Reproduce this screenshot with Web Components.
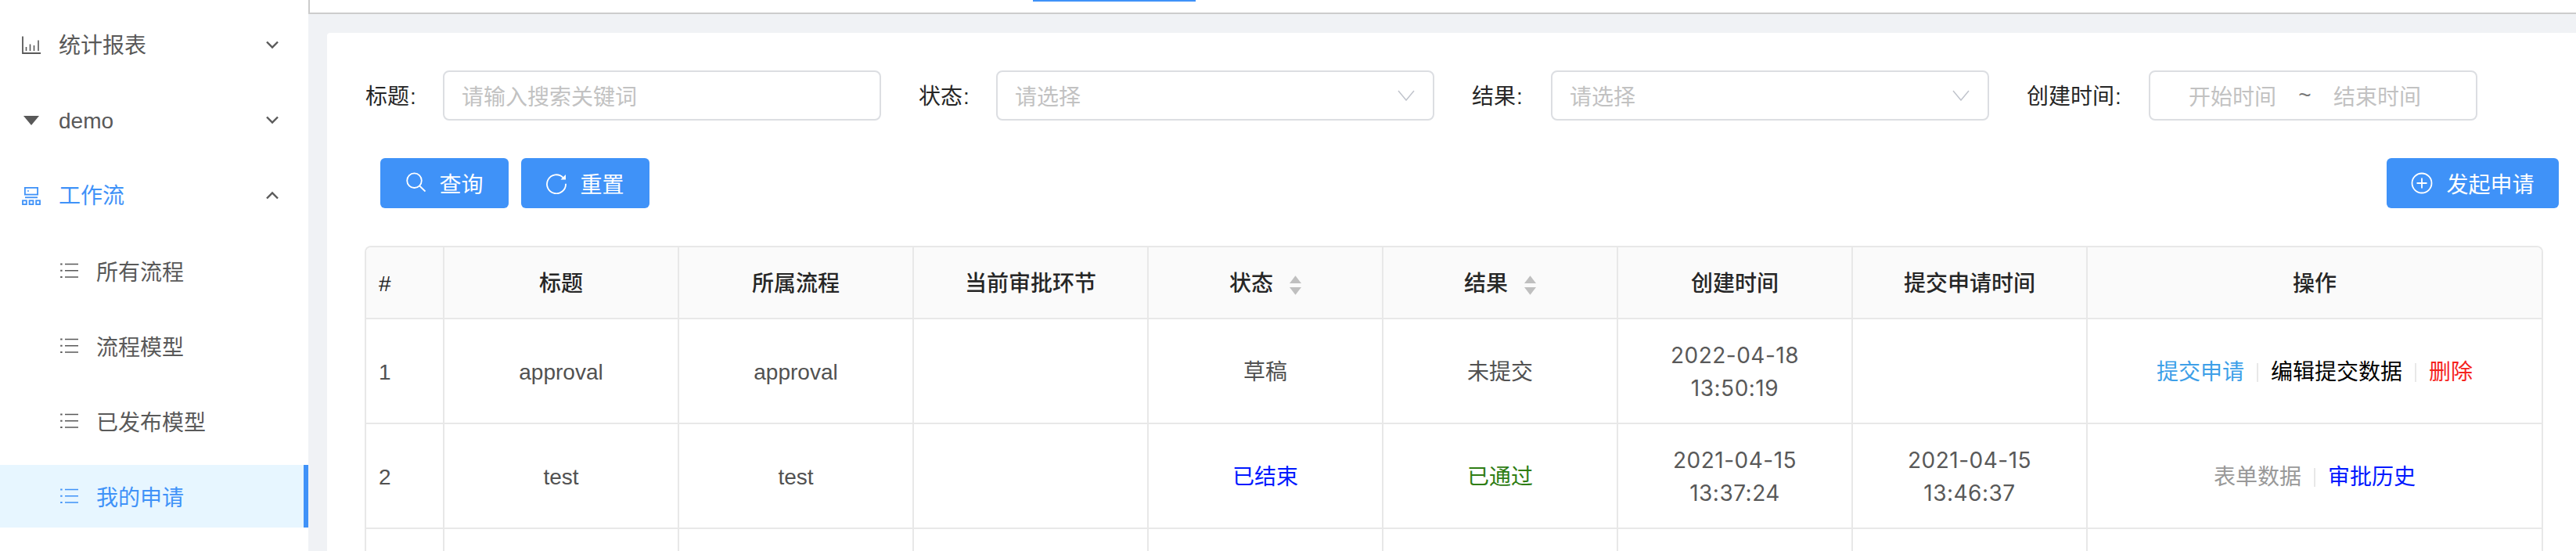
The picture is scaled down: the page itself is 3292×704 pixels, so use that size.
<!DOCTYPE html>
<html lang="zh-CN"><head><meta charset="utf-8"><title>我的申请</title>
<style>
html,body{margin:0;padding:0;height:704px;overflow:hidden;background:#f0f2f5;}
body{font:28px "Liberation Sans","Noto Sans CJK SC",sans-serif;color:#515151;}
</style></head><body>
<app-shell>
  <side-nav slot="nav">
    <nav-item icon="chart" caret="down">统计报表</nav-item>
    <nav-item icon="tri" caret="down">demo</nav-item>
    <nav-item icon="flow" caret="up" open>工作流</nav-item>
    <nav-sub>所有流程</nav-sub>
    <nav-sub>流程模型</nav-sub>
    <nav-sub>已发布模型</nav-sub>
    <nav-sub active>我的申请</nav-sub>
  </side-nav>
  <top-bar slot="top"></top-bar>
  <content-card slot="main">
    <filter-bar>
      <form-field label="标题" label-w="99" w="560"><text-box>请输入搜索关键词</text-box></form-field>
      <form-field label="状态" label-w="99" w="560"><text-box chevron>请选择</text-box></form-field>
      <form-field label="结果" label-w="101" w="560"><text-box chevron>请选择</text-box></form-field>
      <form-field label="创建时间" label-w="156" w="420"><date-range></date-range></form-field>
    </filter-bar>
    <tool-bar>
      <action-button slot="left" icon="search" w="164">查询</action-button>
      <action-button slot="left" icon="reset" w="164">重置</action-button>
      <action-button slot="right" icon="plus" w="220">发起申请</action-button>
    </tool-bar>
    <apply-table></apply-table>
  </content-card>
</app-shell>
<script>
const ICONS={
 chart:'<svg width="24" height="24" viewBox="0 0 24 24" fill="none" stroke="currentColor" stroke-width="1.800"><path d="M1 .500v21.500h23"/><path d="M5.500 19v-5M10.500 19v-8.500M15.500 19v-7M21 19V5.500" stroke-width="1.600"/></svg>',
 tri:'<svg width="24" height="24" viewBox="0 0 24 24" fill="currentColor"><path d="M2 6h20L12 18z"/></svg>',
 flow:'<svg width="24" height="24" viewBox="0 0 24 24" fill="none" stroke="currentColor" stroke-width="1.800"><rect x="3.900" y="1.900" width="16.200" height="8.700"/><path d="M4 14.300h16"/><rect x="1" y="18.300" width="4.800" height="4.800"/><rect x="9.600" y="18.300" width="4.800" height="4.800"/><rect x="18.200" y="18.300" width="4.800" height="4.800"/><circle cx="8" cy="6" r=".9" fill="currentColor" stroke="none"/></svg>',
 list:'<svg width="24" height="20" viewBox="0 0 24 20" fill="none" stroke="currentColor" stroke-width="1.600"><path d="M6 1.500h17M6 9.800h17M6 18h17"/><path d="M.2.500h2.400v2H.2zM.2 8.800h2.400v2H.2zM.2 17h2.400v2H.2z" fill="currentColor" stroke="none"/></svg>',
 down:'<svg width="16" height="12" viewBox="0 0 16 12" fill="none" stroke="currentColor" stroke-width="2.400"><path d="M1 1.500l7 7 7-7"/></svg>',
 up:'<svg width="16" height="12" viewBox="0 0 16 12" fill="none" stroke="currentColor" stroke-width="2.400"><path d="M1 9.500l7-7 7 7"/></svg>',
 search:'<svg width="26" height="28" viewBox="0 0 26 28" fill="none" stroke="currentColor" stroke-width="1.800"><circle cx="11.500" cy="10.700" r="9.300"/><path d="M18.200 17.500l7.300 7"/></svg>',
 reset:'<svg width="26" height="28" viewBox="0 0 26 28" fill="none" stroke="currentColor" stroke-width="1.800"><path d="M21.500 6.800A12 12 0 1 0 25 14.800"/><path d="M25 3v6.500h-6.500z" fill="currentColor" stroke="none"/></svg>',
 plus:'<svg width="28" height="28" viewBox="0 0 28 28" fill="none" stroke="currentColor" stroke-width="1.800"><circle cx="14" cy="14" r="12.500"/><path d="M14 7.500v13M7.500 14h13"/></svg>'
};
function def(name,css,html){
  customElements.define(name,class extends HTMLElement{
    constructor(){super();this.attachShadow({mode:'open'});}
    connectedCallback(){this.shadowRoot.innerHTML='<style>'+css+'</style>'+(typeof html==='function'?html(this):html);}
  });
}
def('app-shell',`:host{display:grid;grid-template-columns:394px 1fr;grid-template-rows:18px 1fr;height:704px;overflow:hidden}
 .n{grid-row:1/3;display:block}.m{padding-top:24px;min-width:0}`,
 `<div class="n"><slot name="nav"></slot></div><div><slot name="top"></slot></div><div class="m"><slot name="main"></slot></div>`);
def('side-nav',`:host{display:block;background:#fff;height:704px;padding-top:10px;box-sizing:border-box;overflow:hidden;color:#595959}`,`<slot></slot>`);
def('nav-item',`:host{display:flex;align-items:center;height:96px;padding:0 38px 0 28px;color:#595959}
 :host([open]) .t,:host([open]) .i{color:#3f92f8}
 .i{display:flex;width:24px;margin-right:23px}.t{flex:1;line-height:1;padding-top:2px}.c{display:flex;color:#595959}`,
 h=>`<span class="i">${ICONS[h.getAttribute('icon')]}</span><span class="t"><slot></slot></span><span class="c">${ICONS[h.getAttribute('caret')]}</span>`);
def('nav-sub',`:host{display:flex;align-items:center;height:80px;margin-top:16px;padding-left:77px;box-sizing:border-box;color:#595959}
 :host(:first-of-type){margin-top:8px}
 :host([active]){background:#e7f6ff;color:#3f92f8;border-right:6px solid #3f92f8}
 .i{display:flex;width:24px;margin-right:22px}`,
 `<span class="i">${ICONS.list}</span><slot></slot>`);
def('top-bar',`:host{display:flex;box-sizing:border-box;height:18px;background:#fff;border-left:2px solid #ccc;border-bottom:2px solid #ccc;padding-left:924px}
 .u{width:208px;height:2px;background:#3f92f8}`,`<div class="u"></div>`);
def('content-card',`:host{display:block;background:#fff;margin-left:24px;padding:48px 22px 0 49px;height:662px;box-sizing:border-box;overflow:hidden;border-top-left-radius:4px}`,`<slot></slot>`);
def('filter-bar',`:host{display:flex;gap:48px;height:64px}`,`<slot></slot>`);
def('form-field',`:host{display:flex;align-items:center;flex:none;color:#262626}
 .l{flex:none;white-space:nowrap;padding-bottom:2px}.b{flex:none}`,
 h=>`<div class="l" style="width:${h.getAttribute('label-w')}px">${h.getAttribute('label')}<span style="margin-left:1px">:</span></div><div class="b" style="width:${h.getAttribute('w')}px"><slot></slot></div>`);
def('text-box',`:host{display:flex;align-items:center;justify-content:space-between;box-sizing:border-box;height:64px;border:2px solid #dcdee2;border-radius:8px;padding:0 22px;color:#c2c2c2;background:#fff}
 svg{display:block;margin-right:1px}`,
 h=>`<span><slot></slot></span>${h.hasAttribute('chevron')?'<svg width="22" height="14" viewBox="0 0 22 14" fill="none" stroke="#c0c4cc" stroke-width="1.500"><path d="M1 1l10 12L21 1"/></svg>':''}`);
def('date-range',`:host{display:flex;align-items:center;box-sizing:border-box;height:64px;border:2px solid #dcdee2;border-radius:8px;padding-left:49px;color:#c2c2c2}
 .s{color:#777;width:73px;text-align:center}`,`<span>开始时间</span><span class="s">~</span><span>结束时间</span>`);
def('tool-bar',`:host{display:flex;justify-content:space-between;margin-top:48px;padding-left:19px;height:64px}
 .g{display:flex;gap:16px}`,`<div class="g"><slot name="left"></slot></div><div class="g"><slot name="right"></slot></div>`);
def('action-button',`:host{display:flex;align-items:center;justify-content:center;gap:17px;box-sizing:border-box;height:64px;background:#3f92f8;color:#fff;border-radius:6px;flex:none}
 svg{display:block}`,
 h=>`<style>:host{width:${h.getAttribute('w')}px}</style>${ICONS[h.getAttribute('icon')]}<span><slot></slot></span>`);
def('sort-arrows',`:host{display:inline-flex;flex-direction:column;gap:5px;margin-left:21px;vertical-align:middle}
 svg{display:block}`,`<svg width="15" height="10" viewBox="0 0 15 10" fill="#bfbfbf"><path d="M7.500 .3L15 10H0z"/></svg><svg width="15" height="10" viewBox="0 0 15 10" fill="#bfbfbf"><path d="M0 0h15L7.500 9.700z"/></svg>`);
def('op-links',`:host{display:inline-flex;align-items:center;justify-content:center}
 ::slotted(s){display:block;width:2px;height:24px;background:#e8e8e8;margin:0 16px;text-decoration:none}`,`<slot></slot>`);
def('date-cell',`:host{display:inline-block;font-family:Inter,"Liberation Sans",sans-serif;color:#595959;letter-spacing:.5px;margin-bottom:2px}`,`<slot></slot>`);
def('apply-table',`:host{display:block;margin:48px 0 0 -1px;width:2784px}
 table{table-layout:fixed;width:100%;border-collapse:separate;border-spacing:0;border:2px solid #e8e8e8;border-bottom:0;border-radius:8px 8px 0 0;}
 th,td{border-right:2px solid #e8e8e8;border-bottom:2px solid #e8e8e8;text-align:center;padding:4px 8px 0;box-sizing:border-box;line-height:42px;font-weight:400;color:#515151}
 th:last-child,td:last-child{border-right:0}
 th{height:92px;background:#fafafa;color:#262626;font-weight:500}
 th:first-child{border-top-left-radius:6px}th:last-child{border-top-right-radius:6px}
 td{height:134px}
 .f{text-align:left;padding-left:16px}
 .blue{color:#0019ff}.green{color:#2e7d14}`,
 `<table><colgroup><col style="width:100px"><col style="width:300px"><col style="width:300px"><col style="width:300px"><col style="width:300px"><col style="width:300px"><col style="width:300px"><col style="width:300px"><col></colgroup>
 <thead><tr><th class="f">#</th><th>标题</th><th>所属流程</th><th>当前审批环节</th><th>状态<sort-arrows></sort-arrows></th><th>结果<sort-arrows></sort-arrows></th><th>创建时间</th><th>提交申请时间</th><th>操作</th></tr></thead>
 <tbody>
 <tr><td class="f">1</td><td>approval</td><td>approval</td><td></td><td>草稿</td><td>未提交</td><td><date-cell>2022-04-18<br>13:50:19</date-cell></td><td></td><td><op-links><span style="color:#3d9fe8">提交申请</span><s></s><span style="color:#000">编辑提交数据</span><s></s><span style="color:#f5231c">删除</span></op-links></td></tr>
 <tr><td class="f">2</td><td>test</td><td>test</td><td></td><td class="blue">已结束</td><td class="green">已通过</td><td><date-cell>2021-04-15<br>13:37:24</date-cell></td><td><date-cell>2021-04-15<br>13:46:37</date-cell></td><td><op-links><span style="color:#999">表单数据</span><s></s><span style="color:#0019ff">审批历史</span></op-links></td></tr>
 <tr><td class="f"></td><td></td><td></td><td></td><td></td><td></td><td></td><td></td><td></td></tr>
 </tbody></table>`);
</script>
</body></html>
